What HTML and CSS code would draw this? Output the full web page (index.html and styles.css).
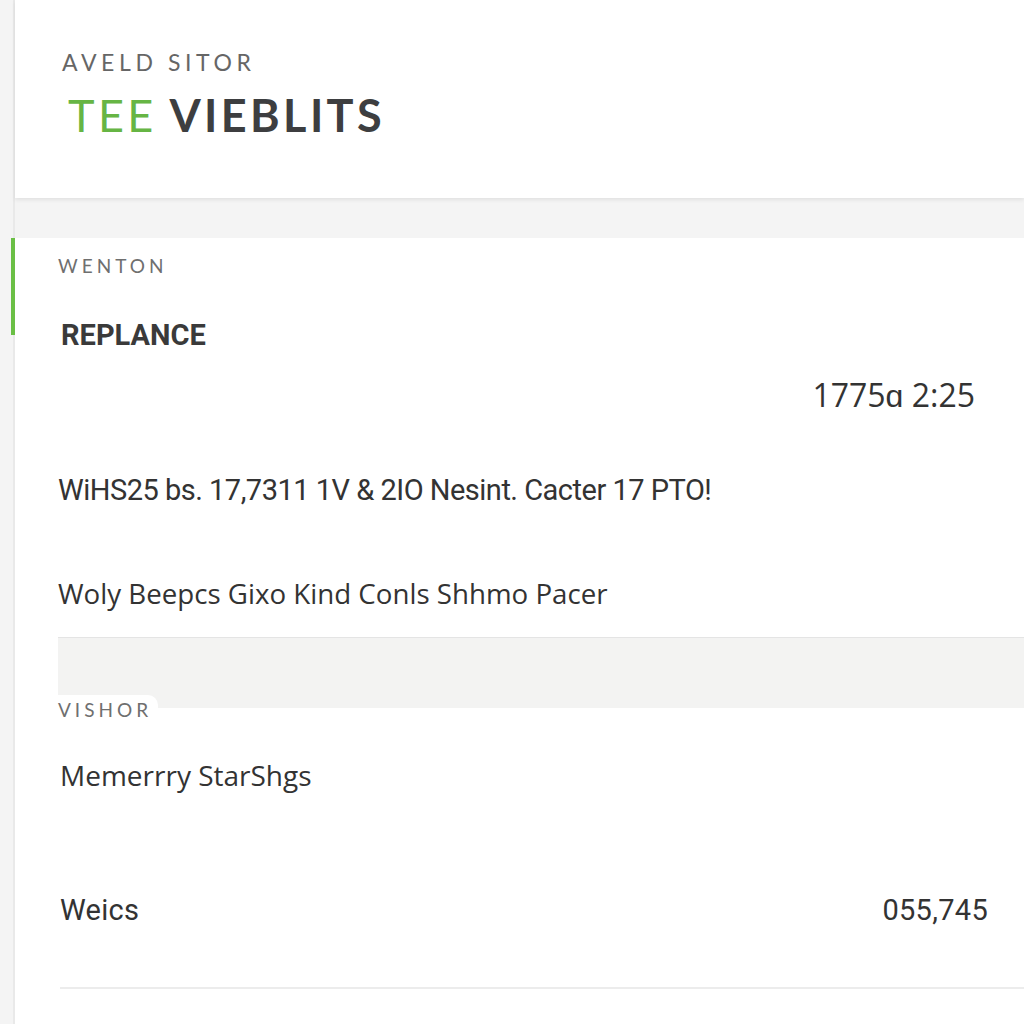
FILE: index.html
```html
<!DOCTYPE html>
<html lang="en">
<head>
    <meta charset="UTF-8">
    <meta name="viewport" content="width=device-width, initial-scale=1.0">
    <title>Tee Vieblits</title>
    <link rel="stylesheet" href="styles.css">
</head>
<body>
    <div class="page">
        <header class="brand">
            <div class="brand-kicker">AVELD SITOR</div>
            <div class="brand-name"><span class="accent">TEE</span> VIEBLITS</div>
        </header>

        <section class="panel">
            <div class="eyebrow">WENTON</div>
            <div class="title">REPLANCE</div>
            <div class="stamp">1775ɑ 2:25</div>
            <div class="meta">WiHS25 bs. 17,7311 1V &amp; 2IO Nesint. Cacter 17 PTO!</div>
            <div class="lede">Woly Beepcs Gixo Kind Conls Shhmo Pacer</div>

            <!-- grey spacer between groups -->
            <div class="band"></div>
            <div class="eyebrow tab">VISHOR</div>

            <div class="lede memory">Memerrry StarShgs</div>
            <div class="stat-row">
                <span class="stat-name">Weics</span>
                <span class="stat-value">055,745</span>
            </div>
        </section>
    </div>
</body>
</html>
```

FILE: styles.css
```css
body {
    margin: 0;
    background-color: #f4f4f4;
    font-family: "Open Sans", "Noto Sans", sans-serif;
    color: #333;
}

.page {
    display: flex;
    flex-direction: column;
    margin-left: 13px;
    border-left: 2px solid #e9e9e9;
    min-height: 1024px;
}

.brand {
    height: 198px;
    box-sizing: border-box;
    padding: 44px 0 0 47px;
    background-color: #fff;
    box-shadow: 0 2px 4px rgba(0, 0, 0, 0.08);
}

.brand-kicker {
    font-family: "Lato", sans-serif;
    font-size: 23px;
    line-height: 36px;
    letter-spacing: 4.6px;
    color: #666;
}

.brand-name {
    margin-left: 6px;
    font-family: "Lato", sans-serif;
    font-size: 45px;
    font-weight: 700;
    line-height: 70px;
    letter-spacing: 3.4px;
    color: #3d3e40;
}

.accent {
    font-weight: 400;
    color: #66b544;
}

.panel {
    flex: 1;
    position: relative;
    margin-top: 40px;
    padding-left: 43px;
    background-color: #fff;
}

.panel::before {
    content: "";
    position: absolute;
    left: -4px;
    top: 0;
    width: 4px;
    height: 97px;
    background-color: #6abf45;
}

.eyebrow {
    font-family: "Lato", sans-serif;
    font-size: 19px;
    line-height: 56px;
    letter-spacing: 4px;
    color: #6f6f6f;
}

.title {
    margin-left: 3px;
    font-family: "Roboto", sans-serif;
    font-size: 29px;
    font-weight: 700;
    line-height: 82px;
    color: #3a3a3a;
}

.stamp {
    padding-right: 49px;
    text-align: right;
    font-family: "Open Sans", sans-serif;
    font-size: 32px;
    line-height: 38px;
    color: #333;
}

.meta {
    margin-top: 56px;
    font-family: "Roboto", sans-serif;
    font-size: 29px;
    line-height: 40px;
    letter-spacing: -0.5px;
    color: #333;
}

.lede {
    margin-top: 63px;
    padding-bottom: 24px;
    border-bottom: 1px solid #e4e4e4;
    font-size: 27.7px;
    line-height: 40px;
    color: #333;
}

.band {
    height: 70px;
    background-color: #f3f3f2;
}

.tab {
    position: relative;
    width: fit-content;
    margin-top: -13px;
    padding-right: 6px;
    line-height: 30px;
    background-color: #fff;
    border-top-right-radius: 10px;
}

.memory {
    margin-top: 30px;
    margin-left: 2px;
    padding-bottom: 0;
    border-bottom: none;
    font-size: 28px;
}

.stat-row {
    display: flex;
    justify-content: space-between;
    align-items: center;
    margin: 95px 0 0 2px;
    padding: 0 36px 57px 0;
    border-bottom: 2px solid #ececec;
    font-family: "Roboto", sans-serif;
    font-size: 29px;
    line-height: 40px;
    letter-spacing: 0.3px;
    color: #333;
}
```
